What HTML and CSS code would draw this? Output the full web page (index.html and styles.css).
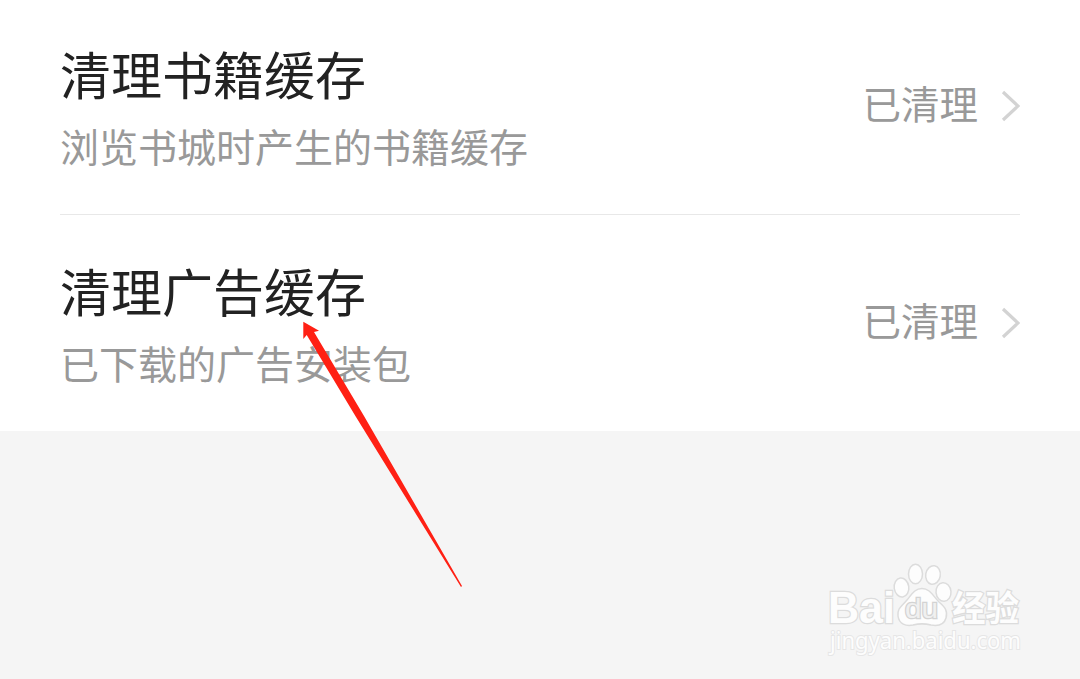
FILE: index.html
```html
<!DOCTYPE html>
<html lang="zh-CN">

<head>
    <meta charset="UTF-8">
    <meta name="viewport" content="width=device-width, initial-scale=1.0">
    <title>清理缓存</title>
    <link rel="stylesheet" href="styles.css">
</head>

<body>
    <div class="list">
        <div class="item first">
            <div class="info">
                <div class="title">清理书籍缓存</div>
                <div class="desc">浏览书城时产生的书籍缓存</div>
            </div>
            <div class="status">
                <span>已清理</span>
                <svg class="chevron" width="20" height="34" viewBox="0 0 20 34">
                    <path d="M3 3 L18 17 L3 31" />
                </svg>
            </div>
        </div>
        <div class="item">
            <div class="info">
                <div class="title">清理广告缓存</div>
                <div class="desc">已下载的广告安装包</div>
            </div>
            <div class="status">
                <span>已清理</span>
                <svg class="chevron" width="20" height="34" viewBox="0 0 20 34">
                    <path d="M3 3 L18 17 L3 31" />
                </svg>
            </div>
        </div>
    </div>

    <!-- pointer to the ad cache row -->
    <svg class="arrow" width="170" height="280" viewBox="0 0 170 280">
        <path d="M3.3 1.8 L19 10.7 L14 12 L64 96 L162 266 L161 267 L56 97 L6.7 15 L3.3 19 Z" />
    </svg>

    <svg class="watermark" width="210" height="105" viewBox="0 0 210 105">
        <g class="logo">
            <text class="brand" x="3" y="68" textLength="67" lengthAdjust="spacingAndGlyphs">Bai</text>
            <ellipse cx="76.5" cy="32.5" rx="7.3" ry="9.5" transform="rotate(-8 76.5 32.5)" />
            <ellipse cx="90.5" cy="19" rx="7" ry="9.8" />
            <ellipse cx="108" cy="20" rx="7.3" ry="9.3" transform="rotate(10 108 20)" />
            <ellipse cx="118.5" cy="37" rx="7.5" ry="9.3" transform="rotate(-5 118.5 37)" />
            <path d="M97 33.5 C105 33.5 108 41 114 47 C120 52 123 56 121 63 C119 70 112 71 106 70 C100 68.5 94 68.5 88 70 C81 71.5 74 69 73 61 C72 53 77 51 82 45 C87 39 90 33.5 97 33.5 Z" />
            <text class="du" x="80" y="63" textLength="33" lengthAdjust="spacingAndGlyphs">du</text>
            <text class="zh" x="127" y="66" textLength="67" lengthAdjust="spacingAndGlyphs">经验</text>
        </g>
        <text class="site" x="5" y="94" textLength="191" lengthAdjust="spacingAndGlyphs">jingyan.baidu.com</text>
    </svg>
</body>

</html>
```
FILE: styles.css
```css
body {
    margin: 0;
    font-family: "Noto Sans CJK SC", sans-serif;
    background-color: #f5f5f5;
}

.list {
    padding: 0 60px;
    background-color: #fff;
}

.item {
    display: flex;
    justify-content: space-between;
    align-items: center;
    height: 216px;
}

.item.first {
    height: 214px;
    border-bottom: 1px solid #e8e8e8;
}

.item.first .info,
.item.first .status {
    margin-top: -2px;
}

.info {
    padding-top: 6px;
}

.title {
    font-size: 51px;
    line-height: 71px;
    color: #222;
}

.desc {
    font-size: 39px;
    line-height: 72px;
    color: #999;
}

.status {
    display: flex;
    align-items: center;
    gap: 22px;
    font-size: 38.5px;
    color: #999;
}

.status span {
    line-height: 54px;
    padding-bottom: 9px;
}

.chevron {
    display: block;
}

.chevron path {
    fill: none;
    stroke: #d3d3d3;
    stroke-width: 3.2;
}

.arrow {
    position: absolute;
    left: 300px;
    top: 320px;
}

.arrow path {
    fill: #ff2014;
}

.watermark {
    position: absolute;
    left: 825px;
    top: 555px;
    overflow: visible;
}

.logo {
    fill: #fdfdfd;
    stroke: #dcdcdc;
    stroke-width: 1.5;
}

.watermark text {
    paint-order: stroke;
}

.brand {
    font: bold 45px "Liberation Sans", sans-serif;
    stroke-width: 2.5;
}

.du {
    font: 28px "Liberation Sans", sans-serif;
    fill: #f0f0f0;
    stroke: #d3d3d3;
    stroke-width: 2.5;
}

.zh {
    font: bold 35px "Noto Sans CJK SC", sans-serif;
    stroke-width: 2.5;
}

.site {
    font: 24px "Noto Sans", sans-serif;
    fill: #fdfdfd;
    stroke: #e6e6e6;
    stroke-width: 2;
}
```
